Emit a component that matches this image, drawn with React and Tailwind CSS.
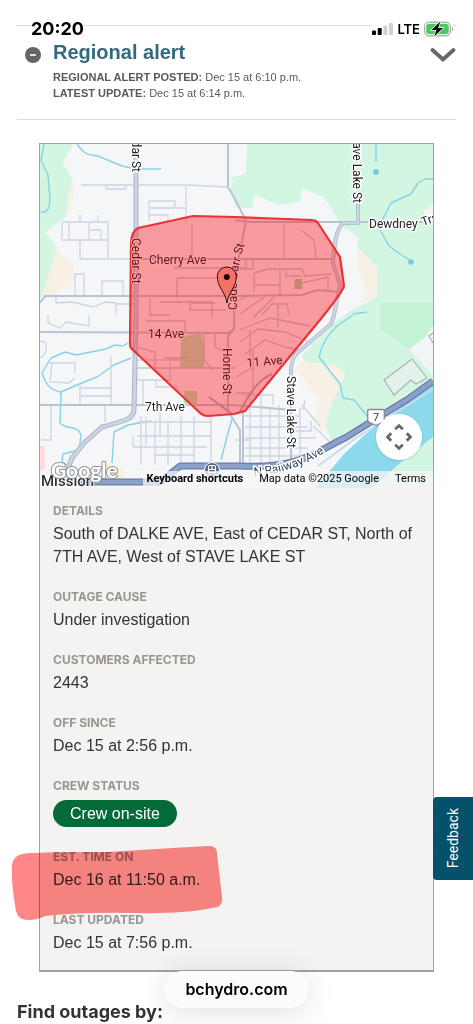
import React from "react";

const details = [
  { label: "Details", value: "South of DALKE AVE, East of CEDAR ST, North of 7TH AVE, West of STAVE LAKE ST" },
  { label: "Outage cause", value: "Under investigation" },
  { label: "Customers affected", value: "2443" },
  { label: "Off since", value: "Dec 15 at 2:56 p.m." },
  { label: "Crew status", value: "Crew on-site", badge: true },
  { label: "Est. time on", value: "Dec 16 at 11:50 a.m.", marked: true },
  { label: "Last updated", value: "Dec 15 at 7:56 p.m." },
];

function StatusBar() {
  return (
    <div className="fixed inset-x-0 top-4 z-20 flex h-[26px] items-center justify-between pr-5 pl-[31px] font-['Inter',sans-serif] text-black">
      <span className="bg-white/80 text-lg leading-6 font-bold">20:20</span>
      <div className="flex items-center gap-1 bg-white">
        <svg className="h-3 w-[21px]" viewBox="0 0 21 12" aria-hidden="true">
          <rect x="0" y="7.5" width="4" height="4.5" rx="1" />
          <rect x="5.7" y="5" width="4" height="7" rx="1" />
          <rect x="11.4" y="2.5" width="4" height="9.5" rx="1" fill="#d0d0d0" />
          <rect x="17" y="0" width="4" height="12" rx="1" fill="#d0d0d0" />
        </svg>
        <span className="text-[13px] leading-6 font-semibold">LTE</span>
        <svg className="h-4 w-[29px]" viewBox="0 0 29 16" aria-hidden="true">
          <rect x="0.6" y="1.1" width="25.8" height="13.8" rx="4.6" fill="#fff" stroke="#a5a5a5" strokeWidth="1.1" />
          <rect x="2.2" y="2.7" width="22.6" height="10.6" rx="3.2" fill="#4bc763" />
          <path d="M27.8 6v4c1-.4 1.2-1 1.2-2s-.2-1.600-1.200-2z" fill="#a5a5a5" />
          <path d="M16.200.4 7.600 9.100h4.800L10.300 15.600 19 6.900h-4.800z" fill="#000" stroke="#fff" strokeWidth="1.400" paintOrder="stroke" />
        </svg>
      </div>
    </div>
  );
}

function AlertHeader() {
  return (
    <section className="mx-[17px] mt-[25px] flex h-[95px] items-start border-y border-[#dcdcdc] pt-[14px]">
      <svg className="mt-[7px] ml-2 size-4 shrink-0" viewBox="0 0 16 16" aria-hidden="true">
        <circle cx="8" cy="8" r="8" fill="#666" />
        <path d="M5 8h6" stroke="#fff" strokeWidth="1.600" />
      </svg>
      <div className="ml-3 flex-1 text-[11px] leading-4 text-[#595959]">
        <h2 className="mb-[5px] text-xl leading-6 font-bold text-[#33697f]">Regional alert</h2>
        <p><strong>REGIONAL ALERT POSTED:</strong> Dec 15 at 6:10 p.m.</p>
        <p><strong>LATEST UPDATE:</strong> Dec 15 at 6:14 p.m.</p>
      </div>
      <button type="button" aria-label="Toggle regional alert" className="mt-[7px] shrink-0">
        <svg className="h-4 w-[26px]" viewBox="0 0 26 16" fill="none" aria-hidden="true">
          <path d="M2.500 3l10.500 9.500L23.500 3" stroke="#666" strokeWidth="3.800" strokeLinecap="round" />
        </svg>
      </button>
    </section>
  );
}

function MapDrawing() {
  return (
    <svg className="block w-full" viewBox="40 144 393 344" role="img" aria-label="Outage area map">
      <rect x="40" y="144" width="393" height="344" fill="#f5f6f8" />

      <g fill="#d2f6e1">
        <path d="M40 144H73L63 163 72 178 65 217 45 232 57 247 50 275 40 301z" />
        <path d="M247 144 246 172 243 175 232 177 231 188 235 207 252 208 255 195 278 205 300 202 302 188 325 198 335 215 341 225 358 237 357 247 378 268 377 297 361 305 350 311 335 322 302 355 305 362 338 366 345 375 332 402 325 425 332 442 433 378V144z" />
      </g>
      <path d="M380 303H433V331L408 349 394 338 380 329z" fill="#c4f2d4" />
      <path d="M72 178 75 188 70 212 65 217zM57 247 62 256 74 264V284L58 292 41 301zM357 247 378 268 377 297 361 303 366 290 358 270zM303 361 338 366 345 375 332 402 325 425 322 434 314 420 320 399 302 378 294 370z" fill="#f6f0e5" />
      <path d="M433 325 425 338 409 349 418 359 433 375zM433 203 423 212 433 226z" fill="#f3f4f5" />
      <path d="M235 150 246 144V172L235 176z" fill="#f5f6f8" />
      <path d="M40 445 45 447V468L40 472z" fill="#fbdde0" />
      <path d="M104 462 123 470V480H104z" fill="#f8f0d2" />
      <path d="M315 488 345 453 368 432 433 383V440L405 459 372 488z" fill="#8cd9ec" />
      <path d="M372 488 405 459 433 437V488z" fill="#d2f6e1" />

      <g fill="none" stroke="#86d2e6" strokeWidth="1.400" strokeLinejoin="round">
        <path d="M44 144 41 160 48 175 50 198C50 209 47 213 41 212" />
        <path d="M77 144C84 154 88 155 98 156L122 166 136 169H161" />
        <path d="M376 144V162M433 179H425L418 183 411 194 391 203 382 221M380 230 389 246 400 254 411 261" />
        <path d="M128 343 123 346 115 345 106 349 76 355 65 352 51 358 42 373C46 385 50 390 61 392L77 385 97 377 114 365 131 358" />
        <path d="M61 392 60 423C66 430 79 425 81 435L79 450 63 454 62 461 66 465" />
        <path d="M151 421 128 425 114 432 112 463" />
        <path d="M353 315 337 326C325 337 321 347 319 357L340 384 343 398 354 400 368 417M232 419 228 433 221 460" />
        <path d="M353 314 367 312" />
      </g>
      <circle cx="376" cy="172" r="3" fill="#78cbe2" />
      <circle cx="411" cy="262" r="2.800" fill="#78cbe2" />

      <g fill="none" stroke="#cdd5e2" strokeWidth="1.300">
        <path d="M81 185H186L228 187M106 186V189H126V186M186 187V222M149 221V201H175V208H186M149 208H186M149 215H168V221" />
        <path d="M62 222H108V258M62 222V240H107M69 222V240M80 215V222M98 215V222M89 222V240M90 230H101V240M80 240V259H136" />
        <path d="M75 295V274H84V295M102 295V281H123V296M56 297V303L72 302 93 307 106 302 116 303V315M116 304H136" />
        <path d="M48 315V323L60 328 66 322 89 326V315M40 341 46 342V352L41 358M49 363H75V373M52 363 50 382 69 383 75 378M111 356V405M80 385V404M80 388H111M80 396H111M51 405V440H41M105 405V422" />
        <path d="M137 380H170V359H190M143 380V405M156 380V387H178M137 360 180 360" />
        <path d="M141 416V465M155 422V465M168 422V465M181 416V465M194 416V465M211 416V465M137 422H211M137 436H211M133 447H207M155 455H194M133 436V447" />
        <path d="M160 412V436M146 416V445M250 393V465M261 393V466M270 407V466M279 405V460M300 407V465M243 395H273V405M245 416H300M245 427H307M245 438H316M245 448H308M245 456H300M302 405 320 426M313 426 330 442M295 431H311V421M235 440H250M305 400 303 410" />
      </g>
      <path d="M384 380 412 359 427 378 416 384 411 380 394 395z" fill="#e4f0ea" stroke="#a7b5b5" strokeWidth="1.200" />
      <path d="M433 333 429 336 433 343" fill="none" stroke="#a7b5b5" strokeWidth="1.200" />

      <g fill="none" stroke="#b8c3d4" strokeWidth="2" strokeLinejoin="round">
        <path d="M130 259H335M40 303 45 296H235L302 295 318 290 340 292M40 332 228 333 235 329M40 405H232L292 410" />
        <path d="M235 220 247 222 300 222H433M228 144V187L235 199 246 221 242 241 235 275 234 329 228 336V411L240 430V466" />
        <path d="M243 411V466M291 376V466" />
      </g>
      <g fill="none" strokeLinejoin="round">
        <path d="M136 144V315L134 410C134 418 128 420 102 427L85 442 72 458 65 476" stroke="#a9b5c9" strokeWidth="5" />
        <path d="M136 144V315L134 410C134 418 128 420 102 427L85 442 72 458 65 476" stroke="#ccd4e2" strokeWidth="3" />
        <path d="M358 203V223H343C336 230 335 240 333 263L340 285 334 315 331 324 296 354C292 360 291 364 291 370V376" stroke="#acb9cd" strokeWidth="4" />
        <path d="M358 203V223H343C336 230 335 240 333 263L340 285 334 315 331 324 296 354C292 360 291 364 291 370V376" stroke="#ccd6e3" strokeWidth="2.400" />
        <path d="M318 466 356 438 433 389" stroke="#c6dce8" strokeWidth="2" />
        <path d="M80 482H160L180 466H240C300 469 315 452 345 438L382 415 408 399 433 381" stroke="#667fac" strokeWidth="7" />
        <path d="M80 482H160L180 466H240C300 469 315 452 345 438L382 415 408 399 433 381" stroke="#8ba1ca" strokeWidth="4.400" />
      </g>

      <path d="M181 336 201 334 204 345V368H180z" fill="#b0e6b8" />
      <path d="M184 391H197V405H184z" fill="#b0e6b8" />
      <path d="M295 279H302V289H294z" fill="#a0d8a8" />
      <g fill="none" stroke="#c0c4d4" strokeWidth="1.300">
        <path d="M192 224V258M174 268H246V260M177 298V278H235M150 298V315H170M160 302H212V317M190 300V310H226M192 303H215M146 321H185V333M137 368H235M204 333V360L213 370M137 347 155 352V370M165 358H190" />
        <path d="M284 224V259M302 231 314 240 316 258M236 269H253V260M254 273 268 269H302L305 276 332 274M254 273V292M254 285H280M280 270V296M286 271V276H302M302 283 328 277V292M235 303 247 296M240 314 266 296M253 318 275 296M262 315 272 304H287L289 315M278 304V328M240 330 270 318 310 326M240 342 258 329 285 332 309 342M245 354 265 340 285 347 300 350M250 368V330M236 377 252 368M236 393H253V350M215 333V347L225 352" />
      </g>
      <path d="M240 412C248 396 257 380 272 374M209 397 232 414" fill="none" stroke="#9fb0c9" strokeWidth="2" />

      <path d="M138 228 193 216 235 217 312 220Q316 220 318 223L340 257 344 286Q343 291 324 315L245 411 234 414 208 416Q203 416 199 412L133 350Q130 348 130 344L131 245Q131 231 138 228z" fill="#ff1416" fillOpacity="0.400" stroke="#e93338" strokeWidth="2.200" strokeLinejoin="round" />

      <g className="font-['Roboto',sans-serif]" fontSize="12" fill="#222" stroke="#fff" strokeWidth="3" strokeLinejoin="round" paintOrder="stroke">
        <text transform="translate(132 172) rotate(90)" textAnchor="end">Cedar St</text>
        <text transform="translate(353 203) rotate(90)" textAnchor="end">Stave Lake St</text>
        <text transform="translate(287 376) rotate(90)">Stave Lake St</text>
        <text x="369" y="228">Dewdney</text>
        <text transform="translate(423 226) rotate(-20)">Trunk Rd</text>
        <text x="145" y="411">7th Ave</text>
      </g>
      <g className="font-['Roboto',sans-serif]" fontSize="12" fill="#5b171b" stroke="#ff9da0" strokeWidth="2" strokeLinejoin="round" paintOrder="stroke">
        <text transform="translate(132 238) rotate(90)">Cedar St</text>
        <text transform="translate(223 348) rotate(90)">Horne St</text>
        <text x="149" y="264">Cherry Ave</text>
        <text x="148" y="338">14 Ave</text>
        <text transform="translate(247 367) rotate(-5)">11 Ave</text>
        <path id="cade" d="M237 310V284Q237 268 247 236" fill="none" stroke="none" />
        <text><textPath href="#cade">Cade Barr St</textPath></text>
      </g>

      <path d="M227 303C226 293 217.300 287 217.300 276.500A9.500 9.500 0 0 1 236.300 276.500C236.300 287 228 293 227 303z" fill="#f97068" stroke="#211514" strokeWidth="1" />
      <circle cx="226.800" cy="277" r="3" fill="#180706" />

      <circle cx="212" cy="470" r="7.500" fill="#516a82" stroke="#fff" strokeWidth="1" />
      <path d="M208.500 467Q208.500 465.500 210 465.500H214Q215.500 465.500 215.500 467V472.500H208.500zM208.500 469.500H215.500M212 465.500V469.500M210 473 208.500 475M214 473 215.500 475" fill="none" stroke="#fff" strokeWidth="1.200" />

      <path id="railway" d="M254 476Q292 474 329 450" fill="none" />
      <text className="font-['Roboto',sans-serif]" fontSize="12" fill="#31415f" stroke="#fff" strokeWidth="3" paintOrder="stroke"><textPath href="#railway">N Railway Ave</textPath></text>

      <path d="M369 409.500H383Q384.300 409.500 384.300 411V420Q384.300 422 382 422.500L376 425.500 370 422.500Q367.700 422 367.700 420V411Q367.700 409.500 369 409.500z" fill="#fff" stroke="#888b90" strokeWidth="1.300" />
      <text className="font-['Roboto',sans-serif]" x="376" y="421" textAnchor="middle" fontSize="11" fill="#333">7</text>

      <text className="font-['Roboto',sans-serif]" x="41" y="486" fontSize="15" fontWeight="500" fill="#303238" stroke="#fff" strokeWidth="2" paintOrder="stroke">Mission</text>
      <text className="font-['Lato',sans-serif]" x="51" y="478" fontSize="21" fontWeight="700" fill="#fff" stroke="#8f949a" strokeWidth="2" strokeLinejoin="round" paintOrder="stroke">Google</text>
    </svg>
  );
}

function OutageMap() {
  return (
    <div className="relative overflow-hidden">
      <MapDrawing />
      <button type="button" aria-label="Map camera controls" className="absolute right-[11px] bottom-7 flex size-[46px] items-center justify-center rounded-full bg-white shadow-sm">
        <svg className="size-7" viewBox="0 0 28 28" fill="none" stroke="#666" strokeWidth="2.800" aria-hidden="true">
          <path d="M10.200 6.200 14 2.600l3.800 3.600M10.200 21.800l3.800 3.600 3.800-3.600M6.200 10.200 2.600 14l3.600 3.800M21.800 10.200l3.600 3.800-3.600 3.800" />
        </svg>
      </button>
      <div className="absolute right-0 bottom-0 flex h-[17px] items-start gap-4 bg-[#f5f5f5]/75 pr-[7px] pl-1 font-['Roboto',sans-serif] text-[11px] leading-4 whitespace-nowrap text-black">
        <button type="button" className="font-bold">Keyboard shortcuts</button>
        <span>Map data ©2025 Google</span>
        <a href="#terms">Terms</a>
      </div>
    </div>
  );
}

function DetailItem({ item }) {
  return (
    <div className="relative">
      <dt className="font-['Inter',sans-serif] text-xs leading-[23px] font-bold text-[#999590] uppercase">{item.label}</dt>
      {item.badge ? (
        <dd className="flex pt-[3px] pb-px">
          <span className="rounded-full bg-[#046a38] px-[17px] leading-[27px] text-white">{item.value}</span>
        </dd>
      ) : (
        <dd className="leading-[23px]">{item.value}</dd>
      )}
      {item.marked && (
        <svg className="absolute -top-px -left-11 h-[76px] w-[216px] mix-blend-multiply" viewBox="0 0 216 76" aria-hidden="true">
          <path d="M3 20Q5 9 22 9 55 8 100 8 145 5 199 2 208 1 208 10L213 53Q215 63 203 64 175 70 125 69 75 68 36 72 24 78 13 75 7 73 6 61 2 37 3 20z" fill="#ff8886" />
        </svg>
      )}
    </div>
  );
}

export default function App() {
  return (
    <main className="min-h-screen overflow-hidden bg-white font-['Liberation_Sans',Arial,sans-serif] text-[#333]">
      <StatusBar />
      <AlertHeader />
      <article className="mx-[39px] mt-[23px] border border-b-2 border-[#a3a3a3] bg-[#f4f3f1]">
        <OutageMap />
        <dl className="flex flex-col gap-[17px] px-[13px] pt-[11px] pb-4 text-base">
          {details.map((item) => (
            <DetailItem key={item.label} item={item} />
          ))}
        </dl>
      </article>
      <h2 className="mx-[17px] mt-7 font-['Inter',sans-serif] text-lg leading-6 font-bold">Find outages by:</h2>

      <button type="button" className="fixed right-0 bottom-36 flex h-[83px] w-10 items-center justify-center rounded-l bg-[#04516b] font-['Roboto',sans-serif] text-sm text-white">
        <span className="rotate-180 [writing-mode:vertical-rl]">Feedback</span>
      </button>
      <div className="pointer-events-none fixed inset-x-0 bottom-4 flex justify-center">
        <span className="rounded-full bg-[#fcfcfc] px-[21px] font-['Inter',sans-serif] text-base leading-[37px] font-semibold text-black shadow-[0_4px_30px_rgba(0,0,0,0.13)]">bchydro.com</span>
      </div>
    </main>
  );
}
